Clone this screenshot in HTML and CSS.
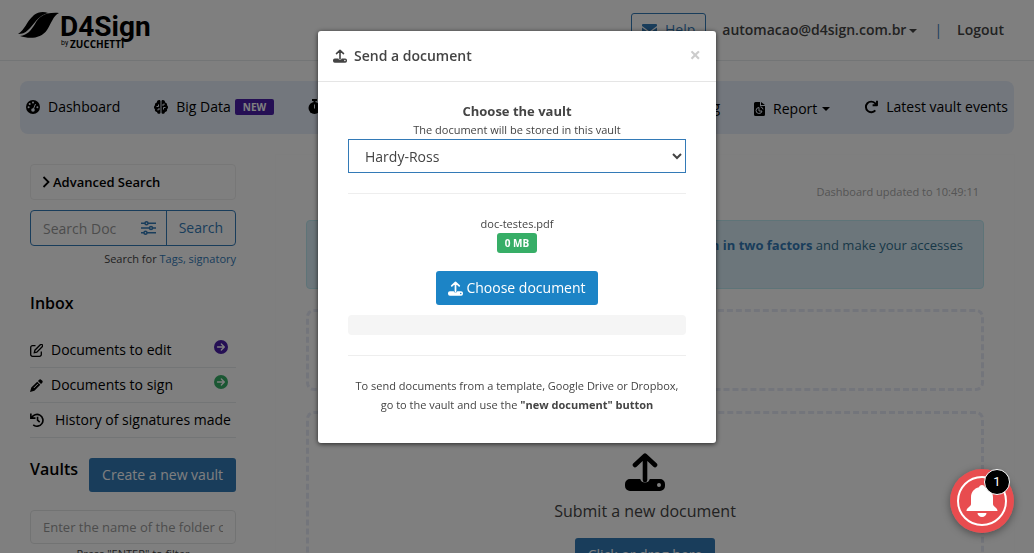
FILE: index.html
```html
<!DOCTYPE html>
<html lang="en">
<head>
<meta charset="utf-8">
<title>D4Sign - Dashboard</title>
<link rel="stylesheet" href="styles.css">
</head>
<body>
<svg class="sprite" aria-hidden="true">
  <symbol id="i-upload" viewBox="0 0 40 38">
    <path d="M20 27V3M10 12L20 2.600L30 12" fill="none" stroke="currentColor" stroke-width="4.600" stroke-linecap="round" stroke-linejoin="round"/>
    <path fill="currentColor" fill-rule="evenodd" d="M5 26h10.200a5 5 0 0 0 9.600 0H35a5 5 0 0 1 5 5v2a5 5 0 0 1-5 5H5a5 5 0 0 1-5-5v-2a5 5 0 0 1 5-5zM34 30a2 2 0 1 0 0 4 2 2 0 0 0 0-4z"/>
  </symbol>
  <symbol id="i-arrow" viewBox="0 0 16 16">
    <circle cx="8" cy="8" r="8" fill="currentColor"/>
    <path d="M4 8h7.500M8.400 4.600L11.800 8l-3.400 3.400" fill="none" stroke="#fff" stroke-width="1.500" stroke-linecap="round" stroke-linejoin="round"/>
  </symbol>
</svg>

<header class="topbar">
  <a class="brand" href="#" aria-label="D4Sign by Zucchetti">
    <svg width="144" height="44" viewBox="0 0 144 44">
      <path d="M2 23C9 19 10 11 18 4C22 1 27 0 32 2C22 4 17 15 12 19C9 22 6 23 2 23z"/>
      <path d="M4 25C12 24 15 19 19 13C23 6 28 1 43 2C37 5 35 13 31 19C25 28 13 28 4 25z"/>
      <text class="brand-name" x="44" y="25">D4Sign</text>
      <text class="brand-by" x="45" y="34">by</text>
      <text class="brand-owner" x="54" y="37">ZUCCHETTI</text>
    </svg>
  </a>
  <div class="account">
    <a class="help" href="#"><svg width="15" height="12" viewBox="0 0 15 12"><path fill="currentColor" d="M1 0h13a1 1 0 0 1 1 1v1L7.500 7.500 0 2V1a1 1 0 0 1 1-1zM0 3.500l7.500 5.500L15 3.500V11a1 1 0 0 1-1 1H1a1 1 0 0 1-1-1z"/></svg>Help</a>
    <a class="user" href="#">automacao@d4sign.com.br<span class="caret"></span></a>
    <span class="bar">|</span>
    <a class="logout" href="#">Logout</a>
  </div>
</header>

<nav class="nav">
  <a href="#"><svg width="14" height="14" viewBox="0 0 14 14"><circle cx="7" cy="7" r="7"/><g class="cut"><circle cx="7" cy="2.600" r="1"/><circle cx="3.700" cy="4" r="1"/><circle cx="2.600" cy="7.200" r="1"/><circle cx="11.400" cy="7.200" r="1"/><circle cx="7" cy="10" r="1.800"/></g><path class="cut-line" d="M7 10L9.500 4"/></svg><span>Dashboard</span></a>
  <a href="#"><svg width="14" height="14" viewBox="0 0 14 14"><path d="M6.500 1.500v11C6.500 14.500 3.300 14.300 3 12 1.200 12 .6 10.500 1 9.300-.4 8.500-.3 6 1 5.200.8 3.600 1.700 2.600 2.900 2.500 3-.5 6.500-.5 6.500 1.500zM7.500 1.500v11c0 2 3.200 1.800 3.500-.5 1.800 0 2.400-1.500 2-2.700 1.400-.8 1.300-3.300 0-4.100.2-1.600-.7-2.600-1.900-2.700C11-.5 7.500-.5 7.500 1.500z"/><path class="cut-line" d="M2.500 6.500H4.500V4.500M4 10.500V9H6M11.500 7.500H9.500V9.500M10 3.500V5H8"/></svg><span>Big Data</span><span class="tag">NEW</span></a>
  <a class="nav-wide" href="#"><svg width="13" height="15" viewBox="0 0 13 15"><circle cx="6.500" cy="9" r="6"/><path d="M4 0h5v2H7.500v2h-2V2H4zM10 3l1.500-1 1 1.500-1.500 1.500z"/><path class="cut-line" d="M6.500 5.500v4"/></svg><span>Billing</span></a>
  <a class="nav-low" href="#"><svg width="11" height="14" viewBox="0 0 11 14"><path d="M1.500 0H6v4h5v8.500A1.500 1.500 0 0 1 9.500 14h-8A1.500 1.500 0 0 1 0 12.500v-11A1.500 1.500 0 0 1 1.500 0zM7 0l4 3H7z"/><path class="cut-line" d="M5 5.500A3 3 0 1 0 8 9H5zM6.500 4.800A3 3 0 0 1 9 7.300"/></svg><span>Report</span><span class="caret"></span></a>
  <a href="#"><svg width="14" height="14" viewBox="0 0 14 14"><path d="M11.300 10.300A5.300 5.300 0 1 1 11 3.200L12.500 5M13 .8V5.200H8.600" fill="none" stroke="#000" stroke-width="1.900" stroke-linejoin="round"/></svg><span>Latest vault events</span></a>
</nav>

<div class="layout">
  <aside class="sidebar">
    <button class="advanced" type="button"><svg width="8" height="12" viewBox="0 0 8 12"><path d="M1.500 1L6.500 6l-5 5" fill="none" stroke="#000" stroke-width="1.800"/></svg>Advanced Search</button>
    <form class="search">
      <input type="text" placeholder="Search Doc" aria-label="Search documents">
      <button class="filter" type="button" aria-label="Filters"><svg width="15" height="14" viewBox="0 0 15 14" fill="none" stroke="currentColor" stroke-width="1.500"><path d="M0 2.300h4M7 2.300h8M0 7h8M12 7h3M0 11.700h3M6 11.700h9"/><circle cx="5.500" cy="2.300" r="1.500"/><circle cx="10" cy="7" r="1.500"/><circle cx="4.500" cy="11.700" r="1.500"/></svg></button>
      <button class="go" type="button">Search</button>
    </form>
    <p class="hint">Search for <a href="#">Tags, signatory</a></p>

    <h2 class="heading">Inbox</h2>
    <ul class="inbox">
      <li><a href="#"><svg width="13" height="13" viewBox="0 0 13 13" fill="none" stroke="#000" stroke-width="1.300"><path d="M5.500 1.700H2.500A1.800 1.800 0 0 0 .7 3.500v7a1.800 1.800 0 0 0 1.800 1.800h7a1.800 1.800 0 0 0 1.800-1.800V7.500M4.300 8.700l.6-2.500L10.300.8a1.200 1.200 0 0 1 1.900 1.900L6.800 8.100z"/></svg><span>Documents to edit</span><svg class="go-edit" width="14" height="14"><use href="#i-arrow"/></svg></a></li>
      <li><a href="#"><svg width="13" height="13" viewBox="0 0 13 13"><path d="M9 .9a1.700 1.700 0 0 1 2.400 0l.7.700a1.700 1.700 0 0 1 0 2.400L11 5.100 7.900 2zM7.200 2.700l3.100 3.100-5.900 5.900L0 13l1.300-4.400z"/><path class="cut-line thin" d="M8 4.800L3.800 9"/></svg><span>Documents to sign</span><svg class="go-sign" width="14" height="14"><use href="#i-arrow"/></svg></a></li>
      <li><a class="history" href="#"><svg width="14" height="14" viewBox="0 0 13 13" fill="none" stroke="#000" stroke-width="1.500"><path d="M1.500 4.500A5.500 5.500 0 1 1 3 11M.8 .5v4.300h4.300M7 3.500v3.200l2 1.800"/></svg><span>History of signatures made</span></a></li>
    </ul>

    <div class="vaults">
      <h2 class="heading">Vaults</h2>
      <button class="primary" type="button">Create a new vault</button>
    </div>
    <input class="folder" type="text" placeholder="Enter the name of the folder or vault" aria-label="Folder name">
    <p class="enter">Press "ENTER" to filter</p>
  </aside>

  <main class="panel">
    <p class="updated">Dashboard updated to 10:49:11</p>
    <div class="alert"><p>Enable the <a href="#">authentication in two factors</a> and make your accesses<br>more secure.</p></div>
    <section class="box box-short"></section>
    <section class="box drop">
      <svg width="40" height="38"><use href="#i-upload"/></svg>
      <p>Submit a new document</p>
      <button class="primary" type="button">Click or drag here</button>
    </section>
  </main>
</div>

<div class="backdrop">
  <div class="modal" role="dialog" aria-labelledby="modal-title">
    <div class="modal-head">
      <svg width="14" height="14"><use href="#i-upload"/></svg>
      <h1 id="modal-title">Send a document</h1>
      <button class="close" type="button" aria-label="Close">×</button>
    </div>
    <div class="modal-body">
      <label class="vault-label" for="vault">Choose the vault</label>
      <p class="small">The document will be stored in this vault</p>
      <select id="vault"><option>Hardy-Ross</option></select>
      <hr>
      <p class="small file">doc-testes.pdf</p>
      <span class="size">0 MB</span>
      <button class="choose" type="button"><svg width="15" height="15"><use href="#i-upload"/></svg>Choose document</button>
      <div class="progress"></div>
      <hr>
      <p class="note">To send documents from a template, Google Drive or Dropbox, go to the vault and use the <strong>"new document" button</strong></p>
    </div>
  </div>
</div>

<button class="bell" type="button" aria-label="Notifications">
  <svg width="64" height="64" viewBox="0 0 64 64">
    <circle cx="32" cy="32" r="32" fill="#e84c4f"/>
    <circle cx="32" cy="32" r="24" fill="none" stroke="#fff" stroke-width="2"/>
    <path fill="#fff" d="M32 16c1.600 0 2.800 1 3 2.300 5 1.200 8 5 8 10.200v6.500c0 3 4.500 3.500 4.500 7H16.500c0-3.500 4.500-4 4.500-7v-6.500c0-5.200 3-9 8-10.200.2-1.300 1.400-2.300 3-2.300zM27.500 44h9a4.500 4 0 0 1-9 0z"/>
  </svg>
  <span class="count">1</span>
</button>
</body>
</html>
```
FILE: styles.css
```css
* { box-sizing: border-box; }
html, body { height: 100%; }
body {
  margin: 0;
  overflow: hidden;
  background: #fff;
  color: #444;
  font: 14px/20px "Open Sans", sans-serif;
}
p, h1, h2, ul { margin: 0; padding: 0; }
a { color: inherit; text-decoration: none; }
button, input, select { font: inherit; color: inherit; }
button { cursor: pointer; }
svg { flex: none; }
.sprite { position: absolute; width: 0; height: 0; }
.caret {
  display: inline-block;
  border: 4px solid transparent;
  border-top-color: currentColor;
  border-bottom: 0;
  vertical-align: middle;
}

.topbar {
  display: flex;
  justify-content: space-between;
  align-items: flex-start;
  height: 61px;
  padding: 11px 30px 0 16px;
  border-bottom: 1px solid #e7eaec;
}
.brand-name { font: bold 28px Roboto, sans-serif; }
.brand-by { font: 7px Roboto, sans-serif; }
.brand-owner { font: bold 10px "Open Sans", sans-serif; }
.account { display: flex; align-items: center; font-weight: 600; padding-top: 2px; }
.help {
  display: flex;
  align-items: center;
  gap: 8px;
  height: 34px;
  padding: 0 10px;
  margin-right: 16px;
  border: 1px solid #337ab7;
  border-radius: 3px;
  color: #337ab7;
  font-weight: 400;
}
.user .caret { margin-left: 3px; }
.bar { margin: 0 15px 0 17px; color: #337ab7; font-weight: 400; }

.nav {
  display: flex;
  justify-content: space-between;
  align-items: center;
  gap: 34px;
  height: 53px;
  margin: 20px 20px 0;
  padding: 0 6px 2px;
  border-radius: 8px;
  background: #e7eefa;
  color: #000;
}
.nav a { display: flex; align-items: center; gap: 8px; white-space: nowrap; }
.nav .nav-wide { flex: 1; justify-content: space-between; }
.nav .nav-low { padding-top: 4px; }
.nav .tag {
  margin-left: -4px;
  padding: 0 8px;
  border-radius: 2px;
  background: #4b1fa8;
  color: #fff;
  font-size: 10px;
  font-weight: 700;
  line-height: 16px;
}
.nav .caret { margin-left: -3px; }
.cut { fill: #e7eefa; }
.cut-line { fill: none; stroke: #e7eefa; stroke-width: 1; }
.thin { stroke: #fff; }

.layout {
  display: flex;
  gap: 39px;
  padding: 0 19px 0 30px;
}
.sidebar { width: 206px; flex: none; padding-top: 30px; color: #000; }
.advanced {
  display: flex;
  align-items: center;
  gap: 3px;
  width: 100%;
  height: 36px;
  padding: 0 11px;
  border: 1px solid #eee;
  border-radius: 4px;
  background: none;
  font-size: 13px;
  font-weight: 600;
}
.search {
  display: flex;
  height: 36px;
  margin-top: 10px;
  border: 1px solid #337ab7;
  border-radius: 4px;
  color: #337ab7;
}
.search input {
  flex: 1;
  min-width: 0;
  padding: 2px 0 0 12px;
  border: 0;
  background: none;
  color: #555;
}
::placeholder { color: #999; opacity: 1; }
.search button { border: 0; padding: 0 12px; background: none; }
.search .filter { padding: 0 10px; display: flex; align-items: center; }
.search .go { border-left: 1px solid #337ab7; }
.hint { margin-top: 3px; font-size: 11px; text-align: right; color: #444; }
.hint a { color: #337ab7; }
.heading { font-size: 16px; font-weight: 600; line-height: 22px; }
.hint + .heading { margin-top: 23px; }
.inbox { margin-top: 19px; list-style: none; }
.inbox a {
  display: flex;
  align-items: center;
  gap: 8px;
  height: 35px;
  border-bottom: 1px solid #e7eaec;
  white-space: nowrap;
}
.inbox .history { gap: 11px; }
.inbox span + svg { margin: 0 8px 6px auto; }
.go-edit { color: #4b1fa8; }
.go-sign { color: #37ae67; }
.vaults { display: flex; justify-content: space-between; margin-top: 20px; }
.primary {
  height: 34px;
  padding: 0 13px;
  border: 0;
  border-radius: 3px;
  background: #337ab7;
  color: #fff;
}
.folder {
  width: 100%;
  height: 34px;
  margin-top: 18px;
  padding: 0 12px;
  border: 1px solid #e5e6e7;
  border-radius: 4px;
  background: none;
  font-size: 13px;
}
.enter { font-size: 11px; text-align: center; color: #444; }

.panel {
  flex: 1;
  margin-top: 20px;
  padding: 27px 30px 0;
  border: 1px solid #fcfcfc;
}
.updated { padding-right: 5px; font-size: 11px; text-align: right; color: #aaa; }
.alert {
  display: flex;
  justify-content: flex-end;
  margin-top: 18px;
  padding: 14px 20px 13px;
  border: 1px solid #bce8f1;
  border-radius: 4px;
  background: #d9edf7;
  color: #31708f;
  font-size: 13px;
}
.alert a { color: #337ab7; font-weight: 700; }
.box { margin-top: 20px; border: 3px dashed #e7eaf6; border-radius: 8px; }
.box-short { height: 82px; }
.drop {
  display: flex;
  flex-direction: column;
  align-items: center;
  height: 240px;
  padding-top: 39px;
}
.drop p { margin: 9px 0 16px; font-size: 16px; line-height: 22px; }
.drop svg { color: #000; }

.backdrop {
  position: fixed;
  inset: 0;
  display: flex;
  justify-content: center;
  align-items: flex-start;
  padding-top: 31px;
  background: rgba(0, 0, 0, 0.5);
}
.modal {
  width: 398px;
  max-width: 100%;
  border-radius: 3px;
  background: #fff;
  box-shadow: 0 1px 5px rgba(0, 0, 0, 0.7);
}
.modal-head {
  display: flex;
  align-items: center;
  gap: 7px;
  padding: 15px;
  border-bottom: 1px solid #e5e5e5;
}
.modal-head h1 { font-size: 14px; font-weight: 600; line-height: 20px; }
.close {
  margin: 0 0 2px auto;
  padding: 0;
  border: 0;
  background: none;
  color: #ccc;
  font-size: 20px;
  font-weight: 700;
  line-height: 18px;
}
.modal-body {
  display: flex;
  flex-direction: column;
  align-items: center;
  padding: 19px 30px 28px;
  text-align: center;
}
.vault-label { font-size: 13px; font-weight: 700; }
.small { font-size: 11px; line-height: 18px; }
.file { line-height: 19px; }
select {
  width: 100%;
  height: 34px;
  padding: 0 0 0 12px;
  border: 1px solid #337ab7;
  border-radius: 0;
  background: #fff;
}
hr { width: 100%; margin: 20px 0; border: 0; border-top: 1px solid #eee; }
.size {
  margin-bottom: 18px;
  padding: 0 8px;
  border-radius: 3px;
  background: #37ae67;
  color: #fff;
  font-size: 10px;
  font-weight: 700;
}
.choose {
  display: flex;
  align-items: center;
  gap: 3px;
  height: 34px;
  padding: 0 12px;
  border: 0;
  border-radius: 3px;
  background: #1c84c6;
  color: #fff;
}
.progress {
  width: 100%;
  height: 20px;
  margin-top: 10px;
  border-radius: 4px;
  background: #f5f5f5;
}
.note { padding-bottom: 1px; font-size: 11px; line-height: 19px; }

.bell {
  position: fixed;
  right: 20px;
  bottom: 20px;
  width: 64px;
  height: 64px;
  padding: 0;
  border: 0;
  border-radius: 50%;
  background: none;
  box-shadow: 0 2px 8px rgba(0, 0, 0, 0.4);
}
.bell svg { display: block; }
.count {
  position: absolute;
  top: 0;
  right: 4px;
  width: 26px;
  height: 26px;
  border: 1px solid #fff;
  border-radius: 50%;
  background: #000;
  color: #fff;
  font: 13px/24px Roboto, sans-serif;
}
```
